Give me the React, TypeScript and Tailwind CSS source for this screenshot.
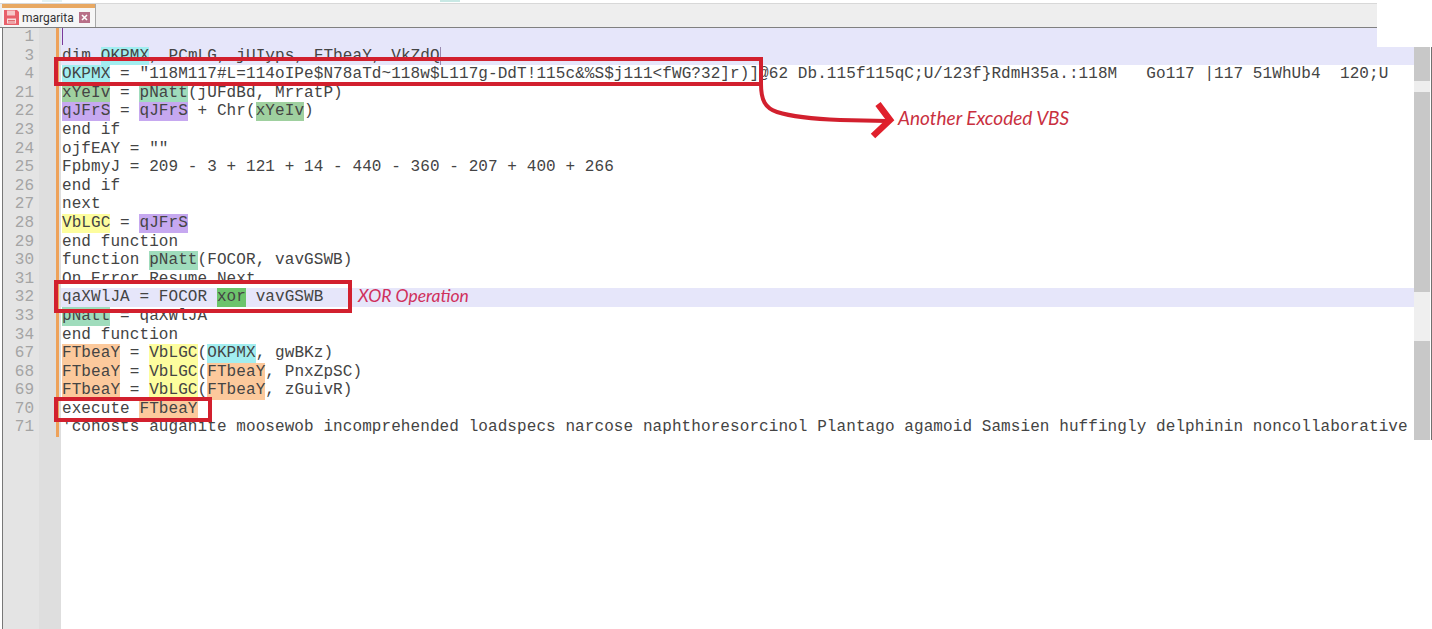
const tokenColors = {
  cyan: "bg-[#a2eef0]",
  green: "bg-[#9fd09f]",
  mint: "bg-[#9fdcbc]",
  purple: "bg-[#c6a8f0]",
  yellow: "bg-[#fdfd9e]",
  orange: "bg-[#fcc99c]",
  xor: "bg-[#6cc46c]",
};

type TokenColor = keyof typeof tokenColors;
type Token = string | [string, TokenColor];

interface Row {
  num: number;
  tokens: Token[];
  active?: boolean;
}

const rows: Row[] = [
  { num: 1, tokens: [], active: true },
  {
    num: 3,
    active: true,
    tokens: ["dim ", ["OKPMX", "cyan"], ", PCmLG, jUIyps, FTbeaY, VkZdQ"],
  },
  {
    num: 4,
    tokens: [
      ["OKPMX", "cyan"],
      ' = "118M117#L=114oIPe$N78aTd~118w$L117g-DdT!115c&%S$j111<fWG?32]r)]@62 Db.115f115qC;U/123f}RdmH35a.:118M   Go117 |117 51WhUb4  120;U',
    ],
  },
  { num: 21, tokens: [["xYeIv", "green"], " = ", ["pNatt", "mint"], "(jUFdBd, MrratP)"] },
  { num: 22, tokens: [["qJFrS", "purple"], " = ", ["qJFrS", "purple"], " + Chr(", ["xYeIv", "green"], ")"] },
  { num: 23, tokens: ["end if"] },
  { num: 24, tokens: ['ojfEAY = ""'] },
  { num: 25, tokens: ["FpbmyJ = 209 - 3 + 121 + 14 - 440 - 360 - 207 + 400 + 266"] },
  { num: 26, tokens: ["end if"] },
  { num: 27, tokens: ["next"] },
  { num: 28, tokens: [["VbLGC", "yellow"], " = ", ["qJFrS", "purple"]] },
  { num: 29, tokens: ["end function"] },
  { num: 30, tokens: ["function ", ["pNatt", "mint"], "(FOCOR, vavGSWB)"] },
  { num: 31, tokens: ["On Error Resume Next"] },
  { num: 32, active: true, tokens: ["qaXWlJA = FOCOR ", ["xor", "xor"], " vavGSWB"] },
  { num: 33, tokens: [["pNatt", "mint"], " = qaXWlJA"] },
  { num: 34, tokens: ["end function"] },
  { num: 67, tokens: [["FTbeaY", "orange"], " = ", ["VbLGC", "yellow"], "(", ["OKPMX", "cyan"], ", gwBKz)"] },
  { num: 68, tokens: [["FTbeaY", "orange"], " = ", ["VbLGC", "yellow"], "(", ["FTbeaY", "orange"], ", PnxZpSC)"] },
  { num: 69, tokens: [["FTbeaY", "orange"], " = ", ["VbLGC", "yellow"], "(", ["FTbeaY", "orange"], ", zGuivR)"] },
  { num: 70, tokens: ["execute ", ["FTbeaY", "orange"]] },
  {
    num: 71,
    tokens: [
      "'cohosts auganite moosewob incomprehended loadspecs narcose naphthoresorcinol Plantago agamoid Samsien huffingly delphinin noncollaborative",
    ],
  },
];

function TabBar() {
  return (
    <div className="flex h-[25px] w-[1377px] border-t border-b border-t-[#d8d8d8] border-b-[#808080] bg-[#eeeeee]">
      <div className="ml-[2px] flex w-[94px] flex-col border-r border-[#a8a8a8] bg-[#f6f6f6]">
        <div className="h-[4px] bg-[#e8a862]" />
        <div className="flex flex-1 items-center pl-[2px]">
          <svg width="15" height="15" viewBox="0 0 15 15" className="shrink-0">
            <path d="M0 0h13l2 2v13H0z" fill="#e8606a" />
            <rect x="3" y="0.5" width="8" height="5" fill="#f6c8c8" />
            <rect x="3" y="8.5" width="9" height="5" fill="#f8dcdc" />
            <path d="M4 10.5h7M4 12h7" stroke="#d85058" strokeWidth="0.8" />
          </svg>
          <span className="ml-[3px] w-[48px] font-['Roboto'] text-[12px] leading-none text-[#333333]">margarita</span>
          <span className="ml-[9px] flex h-[11px] w-[11px] items-center justify-center bg-[#b87088]">
            <svg width="7" height="7" viewBox="0 0 7 7">
              <path d="M1 1l5 5M6 1l-5 5" stroke="#ffffff" strokeWidth="1.6" />
            </svg>
          </span>
        </div>
      </div>
    </div>
  );
}

function Scrollbar() {
  return (
    <div className="flex h-[393px] w-[18px] border-r border-[#707070] pr-px">
      <div className="flex w-[16px] flex-col">
        <div className="h-[34px] bg-[#c8c8c8]" />
        <div className="h-[11px] bg-[#eeeeee]" />
        <div className="h-[200px] bg-[#c8c8c8]" />
        <div className="h-[49px] bg-[#efefef]" />
        <div className="h-[99px] bg-[#c8c8c8]" />
      </div>
    </div>
  );
}

function CodeRow({ row }: { row: Row }) {
  return (
    <div className={`h-[18.6px] pl-[1px] tracking-[0.08px] whitespace-pre ${row.active ? "bg-[#e6e6fa]" : ""}`}>
      {row.tokens.map((token, i) =>
        typeof token === "string" ? (
          <span key={i}>{token}</span>
        ) : (
          <span key={i} className={`inline-block h-[18.6px] ${tokenColors[token[1]]}`}>
            {token[0]}
          </span>
        )
      )}
      {row.num === 1 && <span className="inline-block h-[17px] w-px bg-[#7a3a9a] align-top" />}
      {row.num === 3 && <span className="inline-block h-[18px] w-px bg-[#9a8ab0] align-top" />}
    </div>
  );
}

function AnnotationBox({ className }: { className: string }) {
  return <div className={`absolute border-4 border-[#d2202e] ${className}`} />;
}

export default function App() {
  return (
    <div className="relative flex h-[629px] w-[1432px] flex-col overflow-hidden bg-white font-['Liberation_Mono',monospace] text-[16px] leading-[18.6px] text-[#444444]">
      {/* scrap of the toolbar above the crop */}
      <div className="flex h-[3px] shrink-0 pl-[42px]">
        <div className="h-[2px] w-[20px] bg-[#e4f2f2]" />
        <div className="ml-[378px] h-[2px] w-[20px] bg-[#c8e8e4]" />
      </div>
      <TabBar />

      <div className="flex flex-1">
        {/* line numbers and fold margin */}
        <div className="ml-[2px] flex w-[59px] shrink-0 border-l border-[#777777] bg-[#e4e4e4]">
          <div className="w-[31px] shrink-0 text-right text-[#a4a4a4]">
            {rows.map((row) => (
              <div key={row.num} className="h-[18.6px]">
                {row.num}
              </div>
            ))}
          </div>
          <div className="ml-[5px] flex-1 bg-[#dedede] pl-[17px]">
            <div className="h-[409px] w-[3px] bg-[#eea25a]" />
          </div>
        </div>

        <div className="min-w-0 flex-1">
          {rows.map((row) => (
            <CodeRow key={row.num} row={row} />
          ))}
        </div>

        <div className="w-[18px] shrink-0 pt-[19px]">
          <Scrollbar />
        </div>
      </div>

      {/* white patch pasted over the top right corner */}
      <div className="absolute top-0 right-0 h-[47px] w-[55px] bg-white" />

      {/* red markup drawn over the screenshot */}
      <AnnotationBox className="top-[57px] left-[54px] h-[29px] w-[709px]" />
      <AnnotationBox className="top-[280px] left-[54px] h-[33px] w-[298px]" />
      <AnnotationBox className="top-[397px] left-[54px] h-[25px] w-[158px]" />

      <svg className="absolute top-[80px] left-[755px]" width="145" height="62" viewBox="0 0 145 62">
        <path d="M6 4C6 20 10 28 22 32C38 37 60 39 85 40L132 41" fill="none" stroke="#d2202e" strokeWidth="4" />
        <path d="M123 24L135 40L118 56" fill="none" stroke="#e0202c" strokeWidth="6.5" />
      </svg>

      <span className="absolute top-[107px] left-[898px] font-['Lato'] text-[19px] leading-[22px] font-normal text-[#c9303f] italic">
        Another Excoded VBS
      </span>
      <span className="absolute top-[285px] left-[358px] font-['Lato'] text-[17.5px] leading-[22px] font-normal text-[#d0305c] italic">
        XOR Operation
      </span>
    </div>
  );
}
